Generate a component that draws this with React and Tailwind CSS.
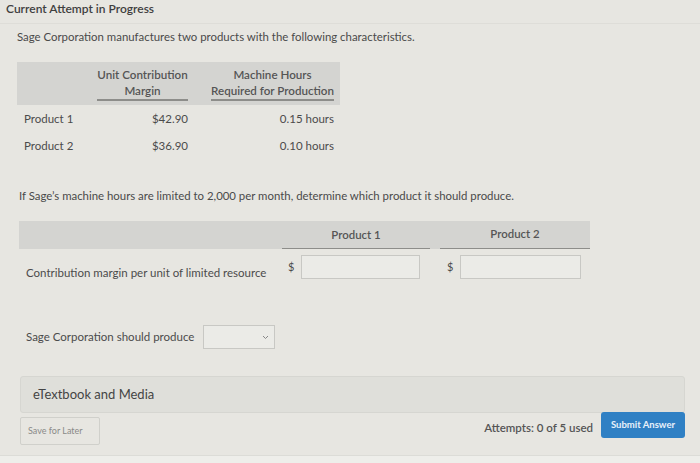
import React from "react";

export default function App() {
  return (
    <div
      className="w-[700px] h-[463px] overflow-hidden bg-[#e7e6e1] text-[#4b4b4b] relative"
      style={{ fontFamily: "Lato, 'Open Sans', sans-serif" }}
    >
      <div className="h-[24px] border-b border-[#deddd8] pl-[6px] pt-[1px] text-[12px] font-semibold text-[#3f3f3f] leading-[16px]">
        Current Attempt in Progress
      </div>

      <div className="pl-[17px] pt-[6px] text-[11.4px] leading-[14px] text-[#4a4a4a]">
        Sage Corporation manufactures two products with the following characteristics.
      </div>

      {/* Table 1 */}
      <div className="ml-[17px] mt-[18px] w-[323px] text-[11.5px]">
        <div className="h-[43px] bg-[#d4d4d1] flex pt-[5px]">
          <div className="w-[80px]" />
          <div className="w-[91px] flex flex-col items-center">
            <div className="text-[11.6px] leading-[16px] font-semibold text-[#555] whitespace-nowrap">Unit Contribution</div>
            <div className="text-[11.6px] leading-[16px] font-semibold text-[#555]">Margin</div>
            <div className="w-full h-[2px] bg-[#8d8d8a]" />
          </div>
          <div className="w-[23px]" />
          <div className="w-[123px] flex flex-col items-center">
            <div className="text-[11.6px] leading-[16px] font-semibold text-[#555] whitespace-nowrap">Machine Hours</div>
            <div className="text-[11.6px] leading-[16px] font-semibold text-[#555] whitespace-nowrap">Required for Production</div>
            <div className="w-full h-[2px] bg-[#8d8d8a]" />
          </div>
        </div>
        {[
          ["Product 1", "$42.90", "0.15 hours"],
          ["Product 2", "$36.90", "0.10 hours"],
        ].map((r) => (
          <div key={r[0]} className="h-[27px] flex items-center">
            <div className="w-[80px] pl-[7px]">{r[0]}</div>
            <div className="w-[91px] text-right">{r[1]}</div>
            <div className="w-[23px]" />
            <div className="w-[123px] text-right">{r[2]}</div>
          </div>
        ))}
      </div>

      <div className="pl-[19px] mt-[30px] text-[11.4px] leading-[14px] text-[#4a4a4a]">
        If Sage’s machine hours are limited to 2,000 per month, determine which product it should produce.
      </div>

      {/* Table 2 */}
      <div className="ml-[19px] mt-[18px] w-[571px] text-[11.5px]">
        <div className="h-[28px] bg-[#d4d4d1] flex">
          <div className="w-[263px]" />
          <div className="w-[148px] flex flex-col justify-end">
            <div className="text-center text-[11.4px] font-semibold text-[#555] leading-[14px] mb-[6px]">Product 1</div>
            <div className="h-[1.5px] bg-[#8d8d8a]" />
          </div>
          <div className="w-[10px]" />
          <div className="w-[150px] flex flex-col justify-end">
            <div className="text-center text-[11.4px] font-semibold text-[#555] leading-[14px] mb-[7px]">Product 2</div>
            <div className="h-[1.5px] bg-[#8d8d8a]" />
          </div>
        </div>
        <div className="flex pt-[5px]">
          <div className="w-[263px] pl-[7px] pt-[12px] leading-[14px] whitespace-nowrap">
            Contribution margin per unit of limited resource
          </div>
          <div className="w-[148px] flex items-center">
            <span className="w-[19px] pl-[6px] text-[11px]">$</span>
            <div className="w-[119px] h-[24px] border border-[#c8c8c4] bg-[#ebebe7]" />
          </div>
          <div className="w-[10px]" />
          <div className="w-[150px] flex items-center">
            <span className="w-[20px] pl-[7px] text-[11px]">$</span>
            <div className="w-[121px] h-[24px] border border-[#c8c8c4] bg-[#ebebe7]" />
          </div>
        </div>
      </div>

      <div className="flex items-center pl-[26px] mt-[45px] text-[11.5px]">
        <span className="w-[177px] whitespace-nowrap">Sage Corporation should produce</span>
        <div className="w-[72px] h-[24px] border border-[#c8c8c4] bg-[#ebebe7] flex items-center justify-end pr-[5px]">
          <svg width="7" height="5" viewBox="0 0 7 5" fill="none">
            <path d="M1 1l2.5 2.5L6 1" stroke="#888" strokeWidth="1" />
          </svg>
        </div>
      </div>

      <div className="ml-[20px] mt-[27px] w-[665px] h-[37px] rounded-[3px] border border-[#d6d6d1] bg-[#dfdfda] flex items-center pl-[12px] text-[13px] text-[#444]">
        eTextbook and Media
      </div>

      <div className="flex items-start ml-[20px] mt-[0px] w-[665px]">
        <div className="mt-[4px] w-[80px] h-[28px] border border-[#d0d0cb] rounded-[2px] flex items-center pl-[7px] text-[9px] text-[#8a8a88]">
          Save for Later
        </div>
        <div className="flex-1" />
        <span className="mt-[6px] text-[11.5px] font-semibold text-[#555] mr-[8px] whitespace-nowrap">Attempts: 0 of 5 used</span>
        <div className="-mt-[1px] w-[84px] h-[26px] rounded-[3px] bg-[#2f80c4] flex items-center justify-center text-[9.5px] font-bold text-[#e8f1fa]">
          Submit Answer
        </div>
      </div>

      <div className="absolute left-0 right-0 bottom-0 h-[8px] bg-[#eeeeea] border-t border-[#dcdcd7]" />
    </div>
  );
}
